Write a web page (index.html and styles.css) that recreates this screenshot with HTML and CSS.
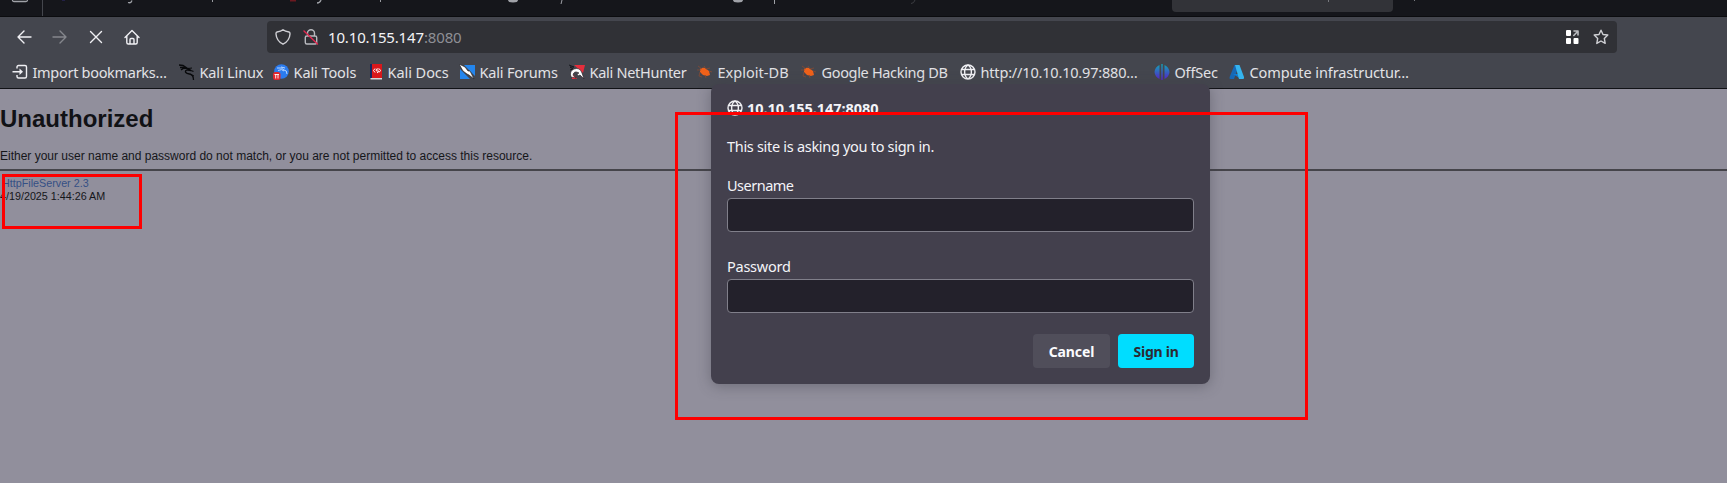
FILE: index.html
```html
<!DOCTYPE html>
<html lang="en">
<head>
<meta charset="utf-8">
<title>10.10.155.147:8080</title>
<link rel="stylesheet" href="styles.css">
</head>
<body>
<div class="browser">
  <div class="tabs">
    <svg class="tab-remains" width="1727" height="16" fill="none">
      <path d="M12.500 0Q12.500 1.500 14 1.500H26Q27.500 1.500 27.500 0" stroke="#a0a2a8" stroke-width="1.300"/>
      <path d="M42.500 0V16" stroke="#44464d"/>
      <path d="M62 0h3" stroke="#302a72" stroke-width="1"/>
      <path d="M128 2.500q3 1 4-2M317 3q3 0 4-3" stroke="#a0a2a8" stroke-width="1.300"/>
      <path d="M212.500 0v2M380.500 0v2" stroke="#999ba0"/>
      <path d="M290 0h6" stroke="#6b1920" stroke-width="3"/>
      <path d="M508 0a5 2.500 0 0 0 10 0zM733 0a5 2.500 0 0 0 10 0z" fill="#a0a2a8"/>
      <path d="M562 0l-1 4M774.500 0v4" stroke="#a0a2a8"/>
      <path d="M911 3.500q3 0 4-3.500" stroke="#3c3d42"/>
      <path d="M1414.500 0v1" stroke="#77797e"/>
    </svg>
    <div class="active-tab"><svg width="221" height="3"><path d="M156.500 0v2" stroke="#77797e"/></svg></div>
  </div>
  <div class="toolbar">
    <div class="nav">
      <svg width="16" height="16"><path d="M15 8H2M8 2L2 8l6 6"/></svg>
      <svg class="off" width="16" height="16"><path d="M1 8h13M8 2l6 6-6 6"/></svg>
      <svg width="16" height="16"><path d="M2.500 2.500l11 11m0-11l-11 11"/></svg>
      <svg width="16" height="16"><path d="M1 8.500L8 1.500l7 7M2.800 7v6.500q0 1.500 1.500 1.500h7.400q1.500 0 1.500-1.500V7M6 15v-4.500q0-1 1-1h2q1 0 1 1V15"/></svg>
    </div>
    <div class="address">
      <svg class="shield" width="16" height="16"><path d="M8 .8Q6 2.500 2 3 .9 3.200 1 5c.3 5 2.600 8 7 10.200C12.400 13 14.700 10 15 5q.1-1.800-1-2-4-.5-6-2.200z"/></svg>
      <svg class="lock" width="16" height="16"><path d="M4.500 7V4.300a3.500 3.500 0 0 1 7 0V7M3.800 7h8.400q1.500 0 1.500 1.500v5q0 1.500-1.500 1.500H3.800q-1.500 0-1.500-1.500v-5Q2.300 7 3.800 7z"/><path d="M1 2l13.500 13" stroke="#e22850"/></svg>
      <span class="host">10.10.155.147<span class="port">:8080</span></span>
      <svg class="tiles" width="14" height="14"><path d="M0 1q0-1 1-1h3q1 0 1 1v4q0 1-1 1H1Q0 6 0 5zM0 9q0-1 1-1h3q1 0 1 1v4q0 1-1 1H1q-1 0-1-1zM7.500 9q0-1 1-1h3q1 0 1 1v4q0 1-1 1h-3q-1 0-1-1z" fill="#fff" stroke="none"/><path d="M8 1h4v4M12 1L7.800 5.500" stroke="#bbbcc0" stroke-width="1.600"/></svg>
      <svg class="star" width="16" height="16"><path d="M8 1.200l2 4.300 4.800.5-3.500 3.400.9 5L8 12l-4.200 2.400.9-5L1.200 6 6 5.500z"/></svg>
    </div>
  </div>
  <div class="bookmarks">
    <div class="bm import"><svg width="16" height="16" fill="none" stroke="#f0f0f4" stroke-width="1.400"><path d="M5 4.500V3q0-1.500 1.500-1.500H13Q14.500 1.500 14.500 3v9.500q0 1.500-1.500 1.500H6.500q-1.500 0-1.500-1.500V11M.5 7.800H9"/><path d="M7.500 4.500L11 7.800 7.500 11z" fill="#f0f0f4" stroke="none"/></svg><span>Import bookmarks…</span></div>
    <div class="bm linux"><svg width="16" height="16" fill="none" stroke="#08090b"><path d="M0 1l4 .5 4 2.500M1 3.500L5 3.500l3 1M2 6l3-2 4 .5 3 2M12 6.500l2.500 1M12 6.500Q6 5 6.500 8q.5 1.500 4 2 4 .5 4 6" stroke-width="1.300"/><path d="M9 4.500l4-.5M11 10l4 2" /></svg><span>Kali Linux</span></div>
    <div class="bm tools"><svg width="16" height="16"><circle cx="8.500" cy="7.500" r="7.300" fill="#2b7bee"/><path d="M4 4q5-1 7 2 3 0 3 4M5 6.500q4-2 6 .5M8 3l4 1" stroke="#b9d7ff" fill="none"/><rect y="8" width="7.500" height="8" rx="2.500" fill="#e3262c"/><path d="M1.500 10.500h4.500M2.700 10.500v4M5 10.500v4" stroke="#fff" stroke-width=".9"/></svg><span>Kali Tools</span></div>
    <div class="bm docs"><svg width="16" height="16"><path d="M3 0h3v14H3z" fill="#17275f"/><path d="M5 0h10v14H5z" fill="#d9171b"/><path d="M3.500 14H15v1.500H3.500z" fill="#d6d5d8"/><path d="M8 4.500L6.500 6.500 8 8.500M12 4.500l1.500 2L12 8.500M11.500 5Q9 4.500 9 6t2 1-1 2" stroke="#fff" fill="none"/></svg><span>Kali Docs</span></div>
    <div class="bm forums"><svg width="16" height="16"><path d="M5 1h11v11zM1 5v10h10z" fill="#2385ed"/><path d="M0 0l6 3 3 4 2 0 4 8-5-4-2-1-4-3z" fill="#fff" stroke="#17191e" stroke-width=".6"/></svg><span>Kali Forums</span></div>
    <div class="bm nethunter"><svg width="16" height="16"><path d="M5 1h11L14 9zM3 9l5 6H3z" fill="#e52e3c"/><path d="M0 1l5 2-4 0 3 2-3 1" stroke="#17191e" fill="none"/><path d="M2 13Q0 7 5 5q6-2 8 4l2 6-4-4-2 1-1-2 2-1Q5 6 4 11q1 2 3 3z" fill="#fff" stroke="#22191e" stroke-width=".6"/></svg><span>Kali NetHunter</span></div>
    <div class="bm exploit"><svg width="16" height="16"><path d="M3 5q2-2 5-1l4 3 1 4-3 1-4-1-3-3z" fill="#ef611a"/><path d="M0 6l4 0M1 2l4 3M7 2l2 3 4-1M12 7l3 1M3 8l-1 4 3 1M8 11l1 3" stroke="#854a33" stroke-width=".8" fill="none"/></svg><span>Exploit-DB</span></div>
    <div class="bm hacking"><svg width="16" height="16"><path d="M3 5q2-2 5-1l4 3 1 4-3 1-4-1-3-3z" fill="#ef611a"/><path d="M0 6l4 0M1 2l4 3M7 2l2 3 4-1M12 7l3 1M3 8l-1 4 3 1M8 11l1 3" stroke="#854a33" stroke-width=".8" fill="none"/></svg><span>Google Hacking DB</span></div>
    <div class="bm http"><svg class="globe" width="16" height="16"><path d="M8 1a7 7 0 1 0 0 14A7 7 0 1 0 8 1zM8 1C3.500 4 3.500 12 8 15M8 1c4.500 3 4.500 11 0 14M1.500 5.500h13M1.500 10.500h13"/></svg><span>http://10.10.10.97:880…</span></div>
    <div class="bm offsec"><svg width="16" height="16"><defs><linearGradient id="os" x2="0" y2="1"><stop stop-color="#11a5b5"/><stop offset="1" stop-color="#5a20ce"/></linearGradient></defs><path d="M5.500 1v14Q1 13 .5 8 1 3 5.500 1zM7.300 0h1.400v16H7.300zM10.500 1v14Q15 13 15.500 8 15 3 10.500 1z" fill="url(#os)"/></svg><span>OffSec</span></div>
    <div class="bm compute"><svg width="16" height="16"><path d="M5.500 1H10L5 15H1.500Q0 15 .6 13z" fill="#1668b6"/><path d="M4 10h7l1 5z" fill="#0e7dd4"/><path d="M6 1h4.500L15 13q.5 2-1 2h-4z" fill="#35b4ee"/></svg><span>Compute infrastructur…</span></div>
  </div>
  <main class="page">
    <h1>Unauthorized</h1>
    <p class="reason">Either your user name and password do not match, or you are not permitted to access this resource.</p>
    <hr>
    <p class="server"><a>HttpFileServer 2.3</a><br><span>4/19/2025 1:44:26 AM</span></p>
  </main>
</div>
<form class="dialog">
  <div class="origin"><svg class="globe" width="16" height="16"><path d="M8 1a7 7 0 1 0 0 14A7 7 0 1 0 8 1zM8 1C3.500 4 3.500 12 8 15M8 1c4.500 3 4.500 11 0 14M1.500 5.500h13M1.500 10.500h13"/></svg><b>10.10.155.147:8080</b></div>
  <p class="prompt">This site is asking you to sign in.</p>
  <label class="first" for="user"><span>Username</span></label>
  <input id="user" type="text">
  <label class="second" for="pass"><span>Password</span></label>
  <input id="pass" type="password">
  <div class="actions"><button type="button"><span>Cancel</span></button><button type="button" class="primary"><span>Sign in</span></button></div>
</form>
<div class="mark mark-server"></div>
<div class="mark mark-dialog"></div>
</body>
</html>
```
FILE: styles.css
```css
* { box-sizing: border-box; }
body { margin: 0; overflow: hidden; font: 14.5px/20px "Noto Sans", sans-serif; color: #e2e2e6; background: #918f9c; }
svg { display: block; flex: none; }
.browser { height: 483px; display: flex; flex-direction: column; }
.tabs { height: 17px; background: #15161b; border-bottom: 1px solid #0b0c0f; display: flex; }
.tab-remains { position: absolute; left: 0; top: 0; }
.active-tab { margin-left: 1172px; width: 221px; height: 12px; background: #323338; border-radius: 0 0 4px 4px; }
.toolbar { height: 40px; background: #44464e; display: flex; padding-top: 4px; }
.nav { display: flex; gap: 20px; padding: 8px 0 0 16px; width: 267px; }
.nav svg, .address svg, .globe { fill: none; stroke: #f0f0f4; stroke-width: 1.4; stroke-linecap: round; stroke-linejoin: round; }
.nav .off { stroke: #85878d; }
.address { width: 1350px; height: 32px; background: #303136; border-radius: 4px; display: flex; align-items: center; padding: 0 8px; }
.address .shield { stroke: #cfcfd4; }
.address .lock { margin-left: 12px; stroke: #b8b9be; }
.host { margin-left: 9px; font-size: 15px; letter-spacing: -.15px; color: #f4f4f6; }
.port { color: #8e8f95; }
.tiles { margin-left: auto; margin-right: 13px; }
.address .star { stroke: #d0d1d5; }
.bookmarks { height: 32px; background: #44464e; border-bottom: 1px solid #111216; display: grid; grid-template-columns: 167px 94px 94px 92px 110px 128px 104px 159px 194px 75px auto; padding: 0 0 1px 12px; align-items: center; }
.bm { display: flex; gap: 4.5px; align-items: center; white-space: nowrap; }
.import { letter-spacing: -.3px; }
.linux { letter-spacing: -.15px; }
.tools { letter-spacing: -.08px; }
.docs { letter-spacing: -.05px; }
.forums { letter-spacing: -.17px; }
.nethunter { letter-spacing: -.28px; }
.exploit { letter-spacing: .03px; }
.hacking { letter-spacing: -.33px; }
.http { letter-spacing: -.18px; }
.offsec { letter-spacing: -.2px; }
.compute { letter-spacing: -.1px; }
.page { flex: 1; font-family: "Liberation Sans", Arial, sans-serif; color: #15161a; }
.page h1 { font-size: 24px; line-height: 28px; margin: 16px 0 16px; color: #111216; }
.reason { font-size: 12px; line-height: 14px; margin: 0; }
.page hr { height: 2px; margin: 6px 0 6px; border: 0; background: #45444a; }
.server { font-size: 10.75px; line-height: 13px; margin: 0; }
.server a { color: #355085; margin-left: 2px; }
.dialog { position: absolute; left: 711px; top: 84px; width: 499px; height: 300px; padding: 14px 16px 16px; border-radius: 8px; background: #43404d; color: #f4f4f8; box-shadow: 0 2px 14px rgba(58, 57, 68, .4); display: flex; flex-direction: column; }
.origin { display: flex; gap: 4px; align-items: center; height: 20px; letter-spacing: -.05px; }
.prompt { margin: 18px 0 19px; letter-spacing: -.3px; }
label { height: 23px; }
label.first { letter-spacing: -.5px; }
label.second { margin-top: 24px; letter-spacing: -.25px; }
input { height: 34px; flex: none; border: 1px solid #807f8a; border-radius: 4px; background: #23212b; outline: 0; }
.actions { display: flex; justify-content: flex-end; gap: 8px; margin-top: 21px; }
button { width: 77px; height: 34px; border: 0; border-radius: 4px; padding: 0; background: #504e5a; color: #fbfbfe; font: bold 14px "Noto Sans", sans-serif; letter-spacing: -.1px; }
.primary { width: 76px; background: #00ddff; color: #2b2a33; letter-spacing: -.25px; }
.mark { position: absolute; border: 3px solid #fe0000; }
.mark-server { left: 2px; top: 174px; width: 140px; height: 55px; }
.mark-dialog { left: 675px; top: 112px; width: 633px; height: 308px; }
```
